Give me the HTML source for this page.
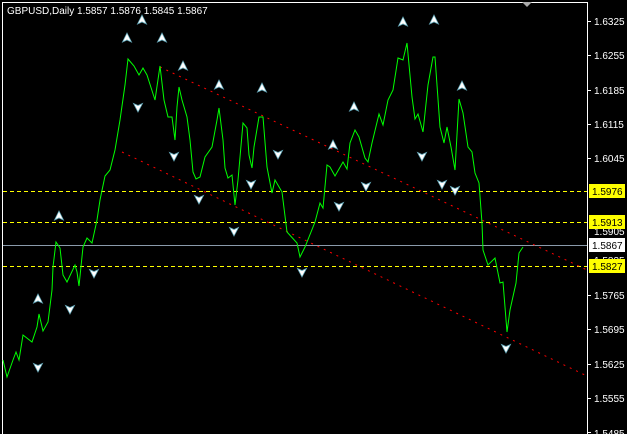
<!DOCTYPE html>
<html><head><meta charset="utf-8"><style>
html,body{margin:0;padding:0;background:#000;width:627px;height:434px;overflow:hidden}
svg{display:block}
text{font-family:"Liberation Sans",sans-serif;font-size:10px}
</style></head><body>
<svg width="627" height="434" viewBox="0 0 627 434" xmlns="http://www.w3.org/2000/svg">
<defs>
<g id="up"><path d="M0,-5 L4.5,4 L0,2 L-4.5,4 Z" fill="#fff" stroke="#6ab" stroke-width="0.8"/></g>
<g id="dn"><path d="M0,5 L4.5,-3.5 L0,-1.5 L-4.5,-3.5 Z" fill="#fff" stroke="#6ab" stroke-width="0.8"/></g>
</defs>
<rect width="627" height="434" fill="#000"/>
<path d="M2.5,434 V2.5 H587.5 V434" fill="none" stroke="#fff" stroke-width="1"/>
<g stroke="#ff0" stroke-width="1" stroke-dasharray="4,3">
<line x1="3" y1="191.5" x2="587" y2="191.5"/>
<line x1="3" y1="222.5" x2="587" y2="222.5"/>
<line x1="3" y1="266.5" x2="587" y2="266.5"/>
</g>
<line x1="3" y1="245.5" x2="587" y2="245.5" stroke="#8a9aaa" stroke-width="1"/>
<g stroke="#f00" stroke-width="1" stroke-dasharray="2,5">
<line x1="160" y1="67" x2="587" y2="270"/>
<line x1="122" y1="152" x2="587" y2="376"/>
</g>
<polyline fill="none" stroke="#0f0" stroke-width="1" points="3,360 7,377 13,360 16,352 19,360 23,335 32,342 37,327 39,314 43,331 48,322 52,290 53,267 56,242 60,248 63,275 67,282 75,265 77,272 79,286 83,247 87,238 92,243 97,220 100,200 105,176 110,170 115,150 120,120 125,85 128,59 134,66 139,75 143,68 147,75 155,100 160,66 164,100 168,117 172,117 175,140 177,107 179,87 182,100 187,117 190,140 193,172 196,179 200,177 205,157 212,147 217,120 219,108 223,140 225,168 228,178 232,175 235,205 238,180 243,123 247,128 249,155 252,168 254,147 259,117 263,117 267,167 272,193 275,180 282,192 287,232 297,243 300,257 305,247 315,222 320,203 323,208 327,165 330,167 335,176 343,162 347,169 350,143 355,130 359,137 365,158 368,162 372,143 379,114 383,125 388,100 393,90 398,58 403,60 407,43 412,97 415,119 418,114 423,132 428,85 433,57 435,57 440,127 444,143 447,127 451,147 455,170 459,99 463,113 468,147 472,152 475,173 479,183 482,223 483,250 488,265 495,258 500,283 503,282 507,332 510,310 516,283 519,253 523,247"/>
<g>
<use href="#up" x="142" y="20"/><use href="#up" x="127" y="38"/><use href="#up" x="162" y="38"/><use href="#up" x="183" y="66"/><use href="#up" x="219" y="85"/><use href="#up" x="262" y="88"/><use href="#up" x="59" y="216"/><use href="#up" x="38" y="299"/><use href="#up" x="333" y="145"/><use href="#up" x="354" y="107"/><use href="#up" x="403" y="22"/><use href="#up" x="434" y="20"/><use href="#up" x="462" y="86"/>
<use href="#dn" x="138" y="107"/><use href="#dn" x="174" y="156"/><use href="#dn" x="199" y="199"/><use href="#dn" x="234" y="231"/><use href="#dn" x="251" y="184"/><use href="#dn" x="278" y="154"/><use href="#dn" x="302" y="272"/><use href="#dn" x="339" y="206"/><use href="#dn" x="366" y="186"/><use href="#dn" x="422" y="156"/><use href="#dn" x="442" y="184"/><use href="#dn" x="455" y="190"/><use href="#dn" x="94" y="273"/><use href="#dn" x="70" y="309"/><use href="#dn" x="38" y="367"/><use href="#dn" x="506" y="348"/>
</g>
<path d="M522,2 L532,2 L527,7 Z" fill="#aaa"/>
<text x="7" y="14" fill="#fff">GBPUSD,Daily  1.5857 1.5876 1.5845 1.5867</text>
<g fill="#fff" stroke="none">
<g stroke="#fff" stroke-width="1">
<line x1="588" y1="21.5" x2="591" y2="21.5"/><line x1="588" y1="55.5" x2="591" y2="55.5"/><line x1="588" y1="90.5" x2="591" y2="90.5"/><line x1="588" y1="124.5" x2="591" y2="124.5"/><line x1="588" y1="158.5" x2="591" y2="158.5"/><line x1="588" y1="295.5" x2="591" y2="295.5"/><line x1="588" y1="329.5" x2="591" y2="329.5"/><line x1="588" y1="364.5" x2="591" y2="364.5"/><line x1="588" y1="398.5" x2="591" y2="398.5"/><line x1="588" y1="432.5" x2="591" y2="432.5"/>
</g>
<text x="594" y="25">1.6325</text><text x="594" y="59">1.6255</text><text x="594" y="94">1.6185</text><text x="594" y="128">1.6115</text><text x="594" y="162">1.6045</text><text x="594" y="299">1.5765</text><text x="594" y="333">1.5695</text><text x="594" y="368">1.5625</text><text x="594" y="402">1.5555</text><text x="594" y="437">1.5485</text>
<text x="594" y="235">1.5905</text><text x="594" y="264">1.5835</text>
</g>
<rect x="589" y="184" width="36" height="14" fill="#ff0"/><text x="592" y="195" fill="#000">1.5976</text>
<rect x="589" y="215" width="36" height="14" fill="#ff0"/><text x="592" y="226" fill="#000">1.5913</text>
<rect x="589" y="238" width="36" height="14" fill="#fff"/><text x="592" y="249" fill="#000">1.5867</text>
<rect x="589" y="259" width="36" height="14" fill="#ff0"/><text x="592" y="270" fill="#000">1.5827</text>
</svg>
</body></html>
